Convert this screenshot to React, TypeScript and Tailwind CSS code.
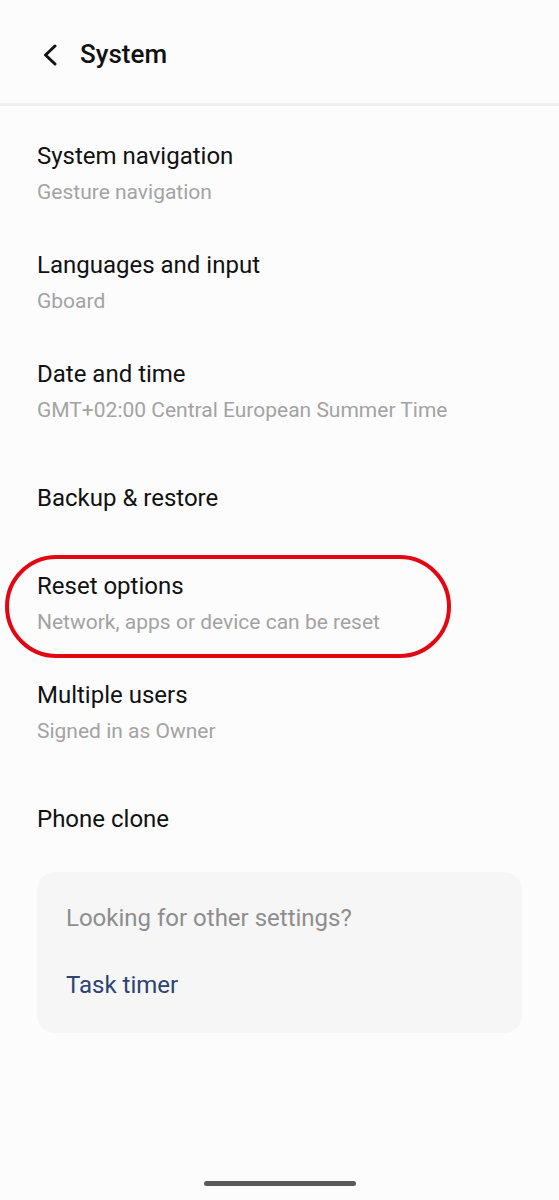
import React from 'react';

type Item = { title: string; subtitle?: string; highlight?: boolean };

const items: Item[] = [
  { title: 'System navigation', subtitle: 'Gesture navigation' },
  { title: 'Languages and input', subtitle: 'Gboard' },
  { title: 'Date and time', subtitle: 'GMT+02:00 Central European Summer Time' },
  { title: 'Backup & restore' },
  { title: 'Reset options', subtitle: 'Network, apps or device can be reset', highlight: true },
  { title: 'Multiple users', subtitle: 'Signed in as Owner' },
  { title: 'Phone clone' },
];

function SettingRow({ item }: { item: Item }) {
  return (
    <div
      className={
        'relative flex flex-col justify-center px-[37px] ' +
        (item.subtitle ? 'h-[109px]' : 'h-[103px]')
      }
    >
      <div className="text-[24px] leading-[30px] text-[#111111]">{item.title}</div>
      {item.subtitle && (
        <div className="mt-[7px] text-[21px] leading-[28px] text-[#a3a3a3]">{item.subtitle}</div>
      )}
      {item.highlight && (
        <div className="absolute left-[5px] top-[6px] w-[446px] h-[103px] rounded-full border-[4px] border-[#e30613]" />
      )}
    </div>
  );
}

export default function App() {
  return (
    <div
      className="w-[559px] h-[1200px] bg-[#fcfcfc] flex flex-col overflow-hidden"
      style={{ fontFamily: 'Roboto, "Noto Sans", sans-serif' }}
    >
      {/* header */}
      <div className="h-[103px] flex items-center pl-[42px] pt-[6px]">
        <svg width="16" height="22" viewBox="0 0 16 22" fill="none">
          <path d="M13 2 L3.5 11 L13 20" stroke="#111" strokeWidth="3" strokeLinecap="round" strokeLinejoin="round" />
        </svg>
        <span className="ml-[22px] text-[26px] font-medium text-[#111111]">System</span>
      </div>
      <div className="h-[3px] bg-[#efefef]" />
      <div className="h-[13px]" />

      {items.map((item) => (
        <SettingRow key={item.title} item={item} />
      ))}

      <div className="mx-[37px] mt-[2px] h-[161px] rounded-[18px] bg-[#f6f6f6] px-[29px] flex flex-col">
        <div className="mt-[31px] text-[24px] leading-[30px] text-[#8e8e8e]">Looking for other settings?</div>
        <div className="mt-[37px] text-[24px] leading-[30px] text-[#2c4373]">Task timer</div>
      </div>

      <div className="flex-1" />
      <div className="flex justify-center pb-[14px]">
        <div className="w-[152px] h-[5px] rounded-full bg-[#5a5a5a]" />
      </div>
    </div>
  );
}
